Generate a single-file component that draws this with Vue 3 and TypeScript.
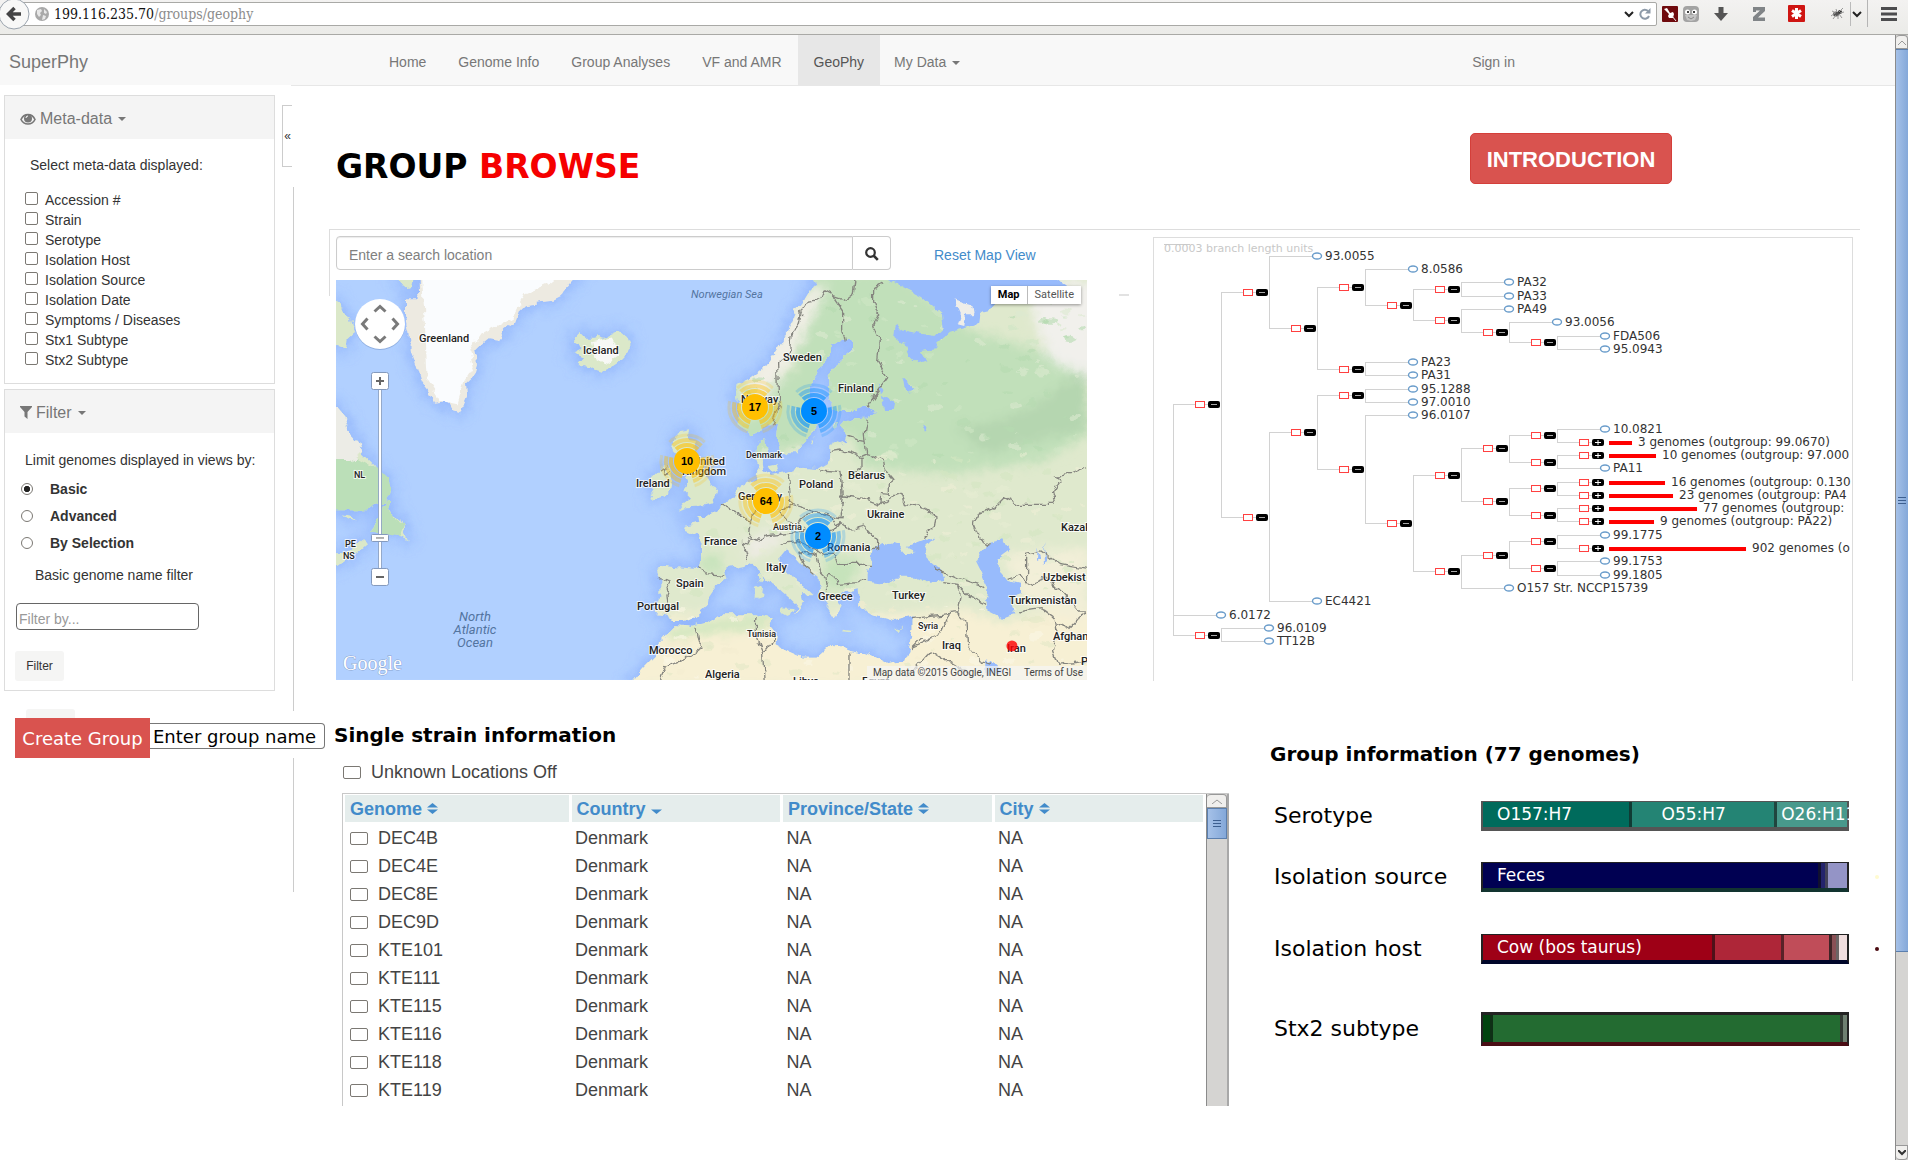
<script setup lang="ts">
import { ref } from 'vue'

interface TreeNode {
  k: number
  y: number
  name?: string
  bar?: number
  c?: TreeNode[]
}

const navItems = ['Home', 'Genome Info', 'Group Analyses', 'VF and AMR', 'GeoPhy']
const metaFields = ['Accession #', 'Strain', 'Serotype', 'Isolation Host', 'Isolation Source', 'Isolation Date', 'Symptoms / Diseases', 'Stx1 Subtype', 'Stx2 Subtype']
const filterModes = ['Basic', 'Advanced', 'By Selection']
const mode = ref('Basic')
const genomes = ['DEC4B', 'DEC4E', 'DEC8E', 'DEC9D', 'KTE101', 'KTE111', 'KTE115', 'KTE116', 'KTE118', 'KTE119']
const columns = [
  { name: 'Genome', sort: 'both' },
  { name: 'Country', sort: 'down' },
  { name: 'Province/State', sort: 'both' },
  { name: 'City', sort: 'both' },
]

const n = (k: number, y: number, c: TreeNode[]): TreeNode => ({ k, y, c })
const leaf = (k: number, y: number, name: string): TreeNode => ({ k, y, name })
const folded = (y: number, bar: number, name: string): TreeNode => ({ k: 9, y, bar, name })

const root = n(0, 0, [
  n(1, 554, [
    n(2, 216, [
      leaf(3, 108, '93.0055'),
      n(3, 325, [
        n(4, 202, [
          leaf(5, 148, '8.0586'),
          n(5, 256, [
            n(6, 208, [leaf(7, 188, 'PA32'), leaf(7, 228, 'PA33')]),
            n(6, 302, [leaf(7, 268, 'PA49'), n(7, 337, [leaf(8, 308, '93.0056'), n(8, 367, [leaf(9, 348, 'FDA506'), leaf(9, 387, '95.0943')])])]),
          ]),
        ]),
        n(4, 447, [leaf(5, 428, 'PA23'), leaf(5, 467, 'PA31')]),
      ]),
    ]),
    n(2, 891, [
      n(3, 637, [
        n(4, 526, [leaf(5, 507, '95.1288'), leaf(5, 547, '97.0010')]),
        n(4, 748, [
          leaf(5, 587, '96.0107'),
          n(5, 910, [
            n(6, 766, [
              n(7, 686, [
                n(8, 646, [leaf(9, 627, '10.0821'), folded(666, 23, '3 genomes (outgroup: 99.0670)')]),
                n(8, 726, [folded(706, 47, '10 genomes (outgroup: 97.000'), leaf(9, 746, 'PA11')]),
              ]),
              n(7, 845, [
                n(8, 805, [folded(786, 56, '16 genomes (outgroup: 0.130'), folded(826, 64, '23 genomes (outgroup: PA4')]),
                n(8, 885, [folded(865, 88, '77 genomes (outgroup:'), folded(905, 45, '9 genomes (outgroup: PA22)')]),
              ]),
            ]),
            n(6, 1054, [
              n(7, 1005, [
                n(8, 965, [leaf(9, 945, '99.1775'), folded(985, 137, '902 genomes (o')]),
                n(8, 1045, [leaf(9, 1025, '99.1753'), leaf(9, 1065, '99.1805')]),
              ]),
              leaf(7, 1105, 'O157 Str. NCCP15739'),
            ]),
          ]),
        ]),
      ]),
      leaf(3, 1144, 'EC4421'),
    ]),
  ]),
  leaf(1, 1185, '6.0172'),
  n(1, 1245, [leaf(2, 1224, '96.0109'), leaf(2, 1264, 'TT12B')]),
])

const px = (k: number) => 19 + 48 * k
const py = (y: number) => Math.round(y / 3 - 18.5)
const links: string[] = []
const forks: { x: number; y: number; plus: boolean }[] = []
const leaves: { x: number; y: number; name: string }[] = []
const bars: { x: number; y: number; w: number; name: string }[] = []
function walk(node: TreeNode) {
  const x = px(node.k)
  for (const child of node.c ?? []) {
    const cx = px(child.k)
    const cy = py(child.y)
    links.push(`M${x + 0.5} ${cy + 0.5}H${child.name && !child.bar ? cx - 5 : cx - 1}`)
    if (child.bar) {
      forks.push({ x: cx, y: cy, plus: true })
      bars.push({ x: cx + 4, y: cy, w: child.bar, name: child.name! })
    } else if (child.name) {
      leaves.push({ x: cx, y: cy, name: child.name })
    } else {
      forks.push({ x: cx, y: cy, plus: false })
    }
    walk(child)
  }
  if (node.c) {
    const ys = node.c.map((d) => py(d.y))
    links.push(`M${x + 0.5} ${Math.min(...ys)}V${Math.max(...ys) + 1}`)
  }
}
walk(root)

const places: [string, number, number, number][] = [
  ['Greenland', 83, 62, 11], ['Iceland', 247, 74, 11], ['NL', 18, 198, 9], ['PE', 9, 267, 9], ['NS', 7, 279, 9],
  ['Sweden', 447, 81, 11], ['Finland', 502, 112, 11], ['Norway', 405, 123, 11], ['Denmark', 410, 178, 9],
  ['Belarus', 512, 199, 11], ['Poland', 463, 208, 11], ['Germany', 402, 220, 11], ['Ukraine', 531, 238, 11],
  ['Austria', 437, 250, 9], ['Romania', 491, 271, 11], ['Italy', 430, 291, 11], ['Greece', 482, 320, 11],
  ['Turkey', 556, 319, 11], ['Syria', 582, 349, 9], ['Iraq', 606, 369, 11], ['Iran', 671, 372, 11],
  ['Tunisia', 411, 357, 9], ['Algeria', 369, 398, 11], ['Libya', 457, 405, 11], ['Egypt', 526, 405, 11],
  ['Kazakh', 725, 251, 11], ['Uzbekist', 707, 301, 11], ['Turkmenistan', 673, 324, 11], ['Afghan', 717, 360, 11],
  ['P', 745, 385, 11], ['United', 357, 185, 11], ['Kingdom', 346, 195, 11], ['Ireland', 300, 207, 11],
  ['France', 368, 265, 11], ['Spain', 340, 307, 11], ['Portugal', 301, 330, 11], ['Morocco', 313, 374, 11],
]
const clusters = [
  { x: 419, y: 127, label: '17', color: '#ffbf00' },
  { x: 478, y: 131, label: '5', color: '#008cff' },
  { x: 430, y: 221, label: '64', color: '#ffbf00' },
  { x: 482, y: 256, label: '2', color: '#008cff' },
  { x: 351, y: 181, label: '10', color: '#ffbf00' },
]

// scattered terrain patches, placed by a small fixed generator
const patches: { x: number; y: number; r: number; c: string }[] = []
let seed = 7
const rnd = () => {
  seed = (seed * 16807) % 2147483647
  return seed / 2147483647
}
for (let i = 0; i < 420; i++) {
  const x = 1000 + rnd() * 1260
  const y = 240 + rnd() * 1130
  const tones = y < 700 ? ['#cfe6c4', '#b6dab0', '#dcead0'] : y < 1150 ? ['#d3e6c1', '#eeeed6', '#e6ecd2'] : ['#f3ecd0', '#e3e8c6', '#faf6e4']
  patches.push({ x, y, r: 5 + rnd() * 17, c: tones[i % 3] })
}

// segment widths are percentages of the bar
const groups = [
  { name: 'Serotype', tone: 'sero', segs: [
    { w: 40, c: '#006b5c', t: 'O157:H7' }, { w: 40, c: '#248474', t: 'O55:H7' }, { w: 20, c: '#48998c', t: 'O26:H11' }] },
  { name: 'Isolation source', tone: 'source', segs: [
    { w: 92, c: '#000052', t: 'Feces' }, { w: 2, c: '#24246c', t: '' }, { w: 6, c: '#9494c6', t: '' }] },
  { name: 'Isolation host', tone: 'host', segs: [
    { w: 63, c: '#9e0016', t: 'Cow (bos taurus)' }, { w: 19, c: '#ae2638', t: '' }, { w: 13, c: '#c04d59', t: '' }, { w: 2, c: '#8a5055', t: '' }, { w: 3, c: '#f0dede', t: '' }] },
  { name: 'Stx2 subtype', tone: 'stx', segs: [
    { w: 2, c: '#00430e', t: '' }, { w: 96, c: '#236b31', t: '' }, { w: 2, c: '#6e7f70', t: '' }] },
]
</script>

<template>
  <div class="window">
    <header class="toolbar">
      <button class="back" aria-label="Back">
        <svg width="30" height="31" viewBox="0 0 30 31"><circle cx="14" cy="14" r="15" fill="#f8f8f7" stroke="#9aa3ad" /><path d="M21 14H9M14.500 8L8.500 14l6 6" fill="none" stroke="#454545" stroke-width="3.500" /></svg>
      </button>
      <div class="address">
        <svg width="14" height="14" viewBox="0 0 14 14"><circle cx="7" cy="7" r="7" fill="#a9a9a9" /><path d="M2 3l4-1 1 2-2 2 1 2-2 2-2-3zM9 2l3 3-1 2-2-1zM8 8l3 1-1 3-3 1z" fill="#e8e8e8" /></svg>
        <span class="url"><b>199.116.235.70</b>/groups/geophy</span>
        <svg width="10" height="7" viewBox="0 0 10 7"><path d="M1 1l4 4 4-4" fill="none" stroke="#222" stroke-width="2" /></svg>
        <svg width="12" height="12" viewBox="0 0 12 12"><path d="M10 8a4.500 4.500 0 1 1-1-5" fill="none" stroke="#8d9aa8" stroke-width="2" /><path d="M11.500 0v5.500H6z" fill="#8d9aa8" /></svg>
      </div>
      <div class="tools">
        <svg width="16" height="16" viewBox="0 0 16 16"><rect width="16" height="16" rx="1" fill="#6f0a0d" /><path d="M2 3l3-1 3 5 3-1 1 2-1 4-4 0-1-2 1-2z" fill="#fff" /><path d="M10 10l4 5" stroke="#eee" /></svg>
        <svg width="16" height="16" viewBox="0 0 16 16"><rect width="16" height="16" rx="4" fill="#a3a3a3" /><path d="M2 9h12l-2 5-4 1-4-1z" fill="#c4c4c4" /><circle cx="4.500" cy="6" r="2.500" fill="#fff" /><circle cx="11.500" cy="6" r="2.500" fill="#fff" /><circle cx="5" cy="6" r="1" /><circle cx="11" cy="6" r="1" /><path d="M5 11l3 2 3-2" fill="none" stroke="#888" /></svg>
        <svg class="t3" width="14" height="14" viewBox="0 0 14 14"><path d="M4.500 0h5v6H14l-7 8-7-8h4.500z" fill="#555" /></svg>
        <svg class="t4" width="12" height="14" viewBox="0 0 12 14"><path d="M0 0h12v4L5 10.500h7V14H0v-4l7-6.500H3V5H0z" fill="#808487" /></svg>
        <svg class="t5" width="17" height="17" viewBox="0 0 17 17"><rect width="17" height="17" rx="1" fill="#cf1512" /><path d="M8.500 3v11M4 5.500l9 6M13 5.500l-9 6" stroke="#fff" stroke-width="3" /></svg>
        <svg class="t6" width="15" height="13" viewBox="0 0 15 13"><ellipse cx="6" cy="7" rx="3" ry="2.500" fill="#555" /><circle cx="10" cy="5" r="2" fill="#333" /><path d="M1 9l4-3M3 12l3-4M8 12V8M12 11L9 7M14 5l-4 1M13 1l-4 4M2 4l4 2M6 2l1 3" stroke="#999" /></svg>
        <svg class="t7" width="12" height="24" viewBox="0 0 12 24"><path d="M.5 0v24" stroke="#bbb" /><path d="M3 10l4 4 4-4" fill="none" stroke="#222" stroke-width="2" /></svg>
        <i class="sep"></i>
        <svg width="16" height="14" viewBox="0 0 16 14"><path d="M0 1.500h16M0 7h16M0 12.500h16" stroke="#4c4c4e" stroke-width="3" /></svg>
      </div>
    </header>

    <div class="view">
      <div class="page">
        <nav class="nav">
          <a class="brand" href="#">SuperPhy</a>
          <a v-for="item in navItems" :key="item" href="#" class="item" :class="{ active: item === 'GeoPhy' }">{{ item }}</a>
          <a href="#" class="item data">My Data <i class="caret"></i></a>
          <a href="#" class="item sign">Sign in</a>
        </nav>

        <div class="body">
          <aside class="side">
            <div class="upper">
              <div class="panels">
                <section class="panel">
                  <h2>
                    <svg width="16" height="12" viewBox="0 0 16 12"><path d="M1 6.500C4 0 12 0 15 6.500 12 12.500 4 12.500 1 6.500z" fill="none" stroke="#777" stroke-width="1.600" /><circle cx="8" cy="5.500" r="4" fill="#777" /><path d="M6 5a2 2 0 0 1 2-2" stroke="#fff" fill="none" /></svg>
                    Meta-data <i class="caret"></i>
                  </h2>
                  <p class="lead">Select meta-data displayed:</p>
                  <label v-for="f in metaFields" :key="f" class="check"><input type="checkbox" />{{ f }}</label>
                </section>
                <section class="panel filter">
                  <h2>
                    <svg width="12" height="13" viewBox="0 0 12 13"><path d="M0 0h12v1L7.500 6v7l-3-2.500V6L0 1z" fill="#777" /></svg>
                    Filter <i class="caret"></i>
                  </h2>
                  <p class="limit">Limit genomes displayed in views by:</p>
                  <label v-for="m in filterModes" :key="m" class="radio"><input v-model="mode" type="radio" name="mode" :value="m" />{{ m }}</label>
                  <label class="basic" for="by">Basic genome name filter</label>
                  <input id="by" class="by" type="text" placeholder="Filter by..." />
                  <button class="apply">Filter</button>
                </section>
                <div class="stub"></div>
              </div>
              <div class="rail">
                <button class="fold" aria-label="Collapse sidebar">«</button>
                <div class="line"></div>
              </div>
            </div>
            <div class="create">
              <button>Create Group</button>
              <input type="text" value="Enter group name" aria-label="Group name" />
            </div>
            <div class="tail"></div>
          </aside>

          <main class="main">
            <div class="head">
              <h1>GROUP <span>BROWSE</span></h1>
              <button class="intro">INTRODUCTION</button>
            </div>

            <div class="views">
              <section class="geo">
                <div class="search">
                  <input type="text" placeholder="Enter a search location" aria-label="Search location" />
                  <button aria-label="Search">
                    <svg width="14" height="14" viewBox="0 0 14 14"><circle cx="5.500" cy="5.500" r="4.300" fill="none" stroke="#333" stroke-width="2.200" /><path d="M8.500 8.500l4.300 4.300" stroke="#333" stroke-width="2.600" /></svg>
                  </button>
                  <a href="#">Reset Map View</a>
                </div>
                <div class="map">
                  <svg class="canvas" viewBox="0 0 751 400">
                    <defs>
                      <filter id="rough" x="0" y="0" width="1" height="1"><feTurbulence type="fractalNoise" baseFrequency="0.090" numOctaves="3" seed="4" /><feDisplacementMap in="SourceGraphic" scale="9" xChannelSelector="R" yChannelSelector="G" /></filter>
                      <filter id="glow"><feGaussianBlur stdDeviation="22" /></filter>
                      <filter id="soft"><feGaussianBlur stdDeviation="16" /></filter>
                      <path id="europe" d="M1435 150L1450 190 1425 230 1395 270 1375 320 1355 360 1330 400 1300 440 1260 470 1220 490 1215 530 1225 570 1220 610 1260 640 1300 625 1325 600 1335 610 1330 640 1350 690 1370 700 1405 700 1415 665 1440 635 1455 600 1432 570 1430 500 1460 460 1470 430 1500 400 1500 370 1530 357 1560 365 1562 390 1540 410 1515 430 1495 470 1495 540 1515 570 1570 570 1605 562 1640 570 1610 590 1570 592 1540 600 1530 620 1548 645 1545 670 1520 655 1495 670 1495 700 1490 730 1465 745 1410 740 1370 755 1320 765 1300 750 1295 720 1310 690 1305 655 1275 680 1270 710 1285 750 1280 775 1255 785 1220 800 1205 830 1170 855 1130 885 1102 885 1105 905 1055 915 1065 930 1100 945 1110 975 1110 1030 1100 1045 1060 1040 1000 1035 975 1045 985 1075 985 1130 970 1175 1000 1180 1030 1200 1050 1200 1090 1190 1125 1160 1130 1130 1150 1100 1185 1070 1180 1050 1200 1040 1250 1030 1285 1045 1300 1080 1340 1100 1375 1130 1395 1150 1390 1180 1420 1140 1415 1120 1445 1120 1420 1095 1385 1070 1360 1040 1345 1010 1365 985 1385 1000 1410 1030 1460 1070 1465 1120 1495 1160 1515 1190 1535 1160 1520 1130 1545 1110 1580 1105 1585 1150 1610 1175 1650 1190 1690 1200 1745 1185 1745 1230 1730 1290 1720 1320 1670 1330 1610 1300 1555 1290 1505 1270 1460 1310 1415 1310 1370 1290 1330 1270 1335 1240 1315 1215 1325 1195 1270 1180 1170 1180 1130 1205 1080 1215 1040 1210 1020 1230 985 1270 980 1300 940 1340 890 1400H2310V150z" />
                      <g id="isles">
                        <path d="M18 240L35 280 60 290 72 330 50 350 45 385 0 370V240zM195 170H245L240 195 215 200z" />
                        <path d="M18 560L35 580 55 630 80 660 95 700 130 735 145 760 165 770 180 795 178 820 150 850 110 868 50 868H-10V540zM165 835L180 840 170 870 195 885 215 900 220 930 230 955 205 945 185 940 150 930 120 935 135 900 150 870zM-10 1000L60 985 95 955 108 970 80 995 45 1015 25 1030-10 1040zM35 880L60 885 75 898 50 892z" />
                        <path d="M725 350L745 330 765 350 785 350 800 345 820 350 850 335 865 330 885 345 897 375 890 400 870 420 840 440 812 452 785 443 765 430 745 430 760 410 725 395 755 380 728 365z" />
                        <path d="M975 760L1000 735 1020 745 1028 775 1025 800 1000 822 965 832 955 825 970 800 960 775zM1045 630L1075 625 1065 650 1095 655 1090 680 1075 700 1105 720 1120 760 1140 790 1160 800 1155 830 1140 850 1100 860 1065 862 1040 872 1060 845 1080 830 1060 810 1075 790 1065 770 1080 750 1050 730 1035 710 1025 680 1035 660z" />
                        <path d="M1275 1090l18 10-3 35-16 5zM1280 1060l12-8 2 25-8 8zM1345 1162l40 2-12 24-28-16zM1535 1220l32 4-10 4-22-3zM1690 1222l24-5-12 13zM1310 735l25-5 5 20-20 5zM1440 665l14-18-8 22zM1505 605l20 5-12 18-10-8z" />
                      </g>
                      <path id="green" d="M268 150L270 215 255 235 225 235 225 290 235 340 240 390 255 430 270 480 295 510 312 545 350 540 365 570 388 577 395 550 408 520 405 490 425 470 438 430 430 390 445 375 470 355 500 360 520 330 550 310 565 270 585 250 620 245 660 240 690 225 705 200 750 150z" />
                      <g id="water">
                        <path d="M1620 1020L1625 990 1660 960 1700 975 1720 1000 1760 990 1730 975 1780 955 1810 950 1780 980 1790 1010 1835 1050 1840 1080 1800 1085 1760 1070 1700 1070 1650 1090 1610 1085 1610 1060z" />
                        <path d="M1975 965L2020 955 2035 985 2000 1010 2005 1050 2030 1080 2070 1090 2070 1120 2040 1130 2050 1180 2010 1190 1970 1170 1965 1130 1970 1100 1950 1050 1935 1020z" />
                        <path d="M1695 310L1725 330 1810 345 1835 320 1830 280 1770 225 1710 195 1660 170H2170L2210 200 2070 215 2010 230 1985 262 1950 270 1945 305 1910 318 1860 332 1820 370 1815 385 1770 390 1785 420 1760 430 1730 400 1720 370 1690 345z" />
                        <path d="M1650 520L1690 545 1685 570 1660 570zM1715 470L1750 500 1740 515 1720 500zM1640 490l20 15-10 12zM1775 610l20 15-10 10zM1960 1318L2000 1330 2020 1352 1960 1360zM2140 970l10 50-8 5zM2120 980l8 35-10 5z" />
                      </g>
                    </defs>
                    <rect width="751" height="400" fill="#b1d0ff" />
                    <g filter="url(#rough)">
                      <g transform="translate(-5 -59) scale(.33333)">
                        <g filter="url(#glow)" fill="#83a9fa" stroke="#83a9fa" stroke-width="20" opacity=".65"><use href="#europe" /><use href="#green" /><use href="#isles" /></g>
                        <use href="#europe" fill="#dfe9cd" />
                        <use href="#isles" fill="#dbe8c9" />
                        <path d="M-10 720L60 700 140 745 165 770 180 795 178 820 150 850 110 868H-10zM165 835L180 840 170 870 220 910 205 945 120 935z" fill="#bbdfb8" />
                        <path d="M18 560L35 580 55 630 80 660 95 700 60 720H-10V540z" fill="#ececE6" />
                        <use href="#green" fill="#edeae1" />
                        <path d="M272 150L283 330 290 480 330 540 380 550 400 480 425 440 415 390 450 340 510 310 545 290 580 220 650 190 700 150z" fill="#fafcfe" />
                        <path d="M780 360L840 350 865 400 820 430 790 410z" fill="#f7f8f5" />
                        <clipPath id="land"><use href="#europe" /></clipPath>
                        <g clip-path="url(#land)">
                          <g filter="url(#soft)">
                            <path d="M1430 150H1700L1900 320 2100 380 2170 400 2271 420V640L2140 720 1850 760 1600 740 1560 640 1200 720V500L1390 450z" fill="#c1e0ba" />
                            <path d="M1980 600L2100 560 2271 430V630L2150 650 1960 700 1870 620z" fill="#b5d6b0" />
                            <path d="M2100 180H2300V480L2160 420 2110 300z" fill="#f1f0ec" />
                            <path d="M890 1400V1180H1340L1740 1180 1900 1160 2000 1200 2310 1150V1400z" fill="#f7f0d4" />
                            <path d="M2010 1000L2271 980V1200L2080 1150z" fill="#f2efd8" />
                            <path d="M1010 1220L1120 1200 1340 1180 1310 1220 1120 1240 1010 1260z" fill="#cfe6be" />
                            <path d="M1230 520L1440 200 1490 190 1390 400 1330 500 1240 600z" fill="#f1efe6" />
                            <path d="M1240 960L1330 930 1380 950 1330 970 1250 1020z" fill="#efece6" />
                            <path d="M1110 1000l60 0 10 60-70-15zM1480 1000l110 20-30 80-80 10z" fill="#c6e3bb" />
                          </g>
                          <ellipse v-for="(p, i) in patches" :key="i" :cx="p.x" :cy="p.y" :rx="p.r" :ry="p.r / 2" :fill="p.c" opacity=".6" />
                        </g>
                        <use href="#water" fill="#98bbfc" />
                        <path d="M1870 235L1920 250 1925 280 1905 280 1900 315 1880 310 1890 280z" fill="#efeee9" />
                        <g fill="none" stroke="#85857f" stroke-width="4">
                          <path d="M1575 180L1570 215 1545 235 1500 220 1480 210 1470 235 1435 240 1410 275 1405 310 1380 345 1375 400 1340 430 1342 510 1348 550 1325 610M1500 220L1535 270 1535 320 1543 365M1660 185L1625 205 1625 240 1640 280 1625 310 1645 360 1640 420 1670 470 1605 562M1612 592L1603 640 1610 700 1640 710 1660 720 1665 750 1690 780 1675 790 1675 820 1652 818 1650 850 1600 832 1540 825" />
                          <path d="M1548 645L1580 655 1605 658M1495 695L1530 690 1570 700 1590 710 1612 700M1570 750L1590 740 1590 710M1465 750L1530 755 1537 820 1540 830 1530 890 1500 885 1450 870 1380 850 1372 760M1380 850L1345 870 1370 900 1400 910 1420 880 1450 870M1170 850L1230 880 1260 905 1275 870M1265 910L1260 950 1250 970 1235 965 1250 1020M1250 950L1290 960 1300 945 1400 935 1420 920M1500 885L1510 915 1530 905 1560 925 1600 915 1640 960 1640 985 1620 990M1530 905L1510 930 1460 950 1455 990 1480 1000 1510 1000 1520 1030 1620 1030M1350 970L1400 965 1455 990M1400 990L1420 1035 1450 1060M1400 990L1440 1005 1455 1000 1465 1050 1485 1070 1500 1060 1515 1070 1520 1090 1580 1085 1605 1070M1490 1110L1485 1070M1100 1040L1130 1055 1180 1060M980 1070L1020 1080 1005 1120 1010 1170M1095 1220L1105 1270 1112 1280 1070 1310 1000 1340 985 1380M1275 1185L1272 1240 1295 1300 1300 1380M1325 1235L1325 1260 1295 1300M1557 1295V1380M1740 1190L1880 1175 1890 1130 1880 1090 1840 1085M1650 850L1680 830 1710 820 1720 850 1770 860 1815 885 1810 920 1780 950M1880 1175L1905 1200 1910 1270 1950 1320 1980 1330M1740 1280L1830 1240 1855 1180M1740 1280L1770 1250 1790 1260M1730 1370L1800 1290 1930 1370M1810 1040L1880 1070 1940 1090 1960 1100M1880 1090L1920 1130 1965 1150M1975 970L1950 960 1930 910 1940 880 1990 860 2020 830 2060 850 2110 850 2175 850 2165 820 2190 780 2175 765 2220 760 2271 740M2087 1090V1000L2130 990 2185 1030 2271 1045M2030 1075L2060 1065 2100 1090 2150 1070 2190 1110 2240 1170 2271 1170M2060 1170L2130 1160 2170 1190 2175 1240 2165 1290 2180 1330 2271 1320M2175 1210L2210 1220 2240 1190 2271 1175M990 750L1005 740 1000 765 1020 755" />
                        </g>
                      </g>
                    </g>
                    <text class="sea" x="355" y="18">Norwegian Sea</text>
                    <text class="ocean" x="139" y="341">North</text>
                    <text class="ocean" x="139" y="354">Atlantic</text>
                    <text class="ocean" x="139" y="367">Ocean</text>
                    <text v-for="p in places" :key="p[0]" class="place" :x="p[1]" :y="p[2]" :font-size="p[3]">{{ p[0] }}</text>
                    <g v-for="c in clusters" :key="c.label" :transform="`translate(${c.x} ${c.y})`">
                      <g fill="none" :stroke="c.color" stroke-dasharray="86 34" transform="rotate(-133)">
                        <circle r="16" pathLength="360" stroke-width="4" opacity=".6" />
                        <circle r="21" pathLength="360" stroke-width="4" opacity=".4" />
                        <circle r="26" pathLength="360" stroke-width="3" opacity=".2" />
                      </g>
                      <circle r="13" :fill="c.color" />
                      <text class="count" y="4">{{ c.label }}</text>
                    </g>
                    <circle cx="676" cy="366" r="5.500" fill="#f00" opacity=".8" />
                    <g>
                      <circle cx="44" cy="45" r="25" fill="#6f8fc4" opacity=".5" /><circle cx="44" cy="44" r="25" fill="#fff" />
                      <path d="M38.500 31.500l5.500-5 5.500 5M38.500 56.500l5.500 5 5.500-5M31.500 38.500l-5 5.500 5 5.500M56.500 38.500l5 5.500-5 5.500" fill="none" stroke="#7a7a7a" stroke-width="3" />
                      <rect x="42.500" y="106" width="3" height="186" fill="#fff" stroke="#8399bd" stroke-width=".8" />
                      <g fill="#fff" stroke="#8399bd"><rect x="35.500" y="92.500" width="17" height="17" rx="2" /><rect x="35.500" y="254.500" width="17" height="7" rx="1" /><rect x="35.500" y="288.500" width="17" height="17" rx="2" /></g>
                      <path d="M40 101h8M44 97v8M40 297h8" stroke="#666" stroke-width="2" /><path d="M40 258h8" stroke="#666" />
                    </g>
                    <text class="google" x="7" y="390">Google</text>
                    <rect x="531" y="386" width="220" height="14" fill="#f5f5f5" opacity=".7" />
                    <text class="credit" x="537" y="396">Map data ©2015 Google, INEGI</text>
                    <text class="credit" x="688" y="396">Terms of Use</text>
                  </svg>
                  <div class="kind"><button class="on">Map</button><button>Satellite</button></div>
                </div>
              </section>

              <i class="dash"></i>

              <section class="tree">
                <svg viewBox="0 0 698 443">
                  <path d="M10 6.500h26" stroke="#ccc" />
                  <text class="scale" x="10" y="14">0.0003 branch length units</text>
                  <path v-for="(d, i) in links" :key="i" :d="d" stroke="#d2d2d2" fill="none" />
                  <g v-for="(f, i) in forks" :key="'f' + i" :transform="`translate(${f.x} ${f.y})`">
                    <rect x="-25.500" y="-2.500" width="9" height="6" fill="#fff" stroke="#ff4040" />
                    <rect x="-13" y="-3" width="12" height="7" rx="2" fill="#000" />
                    <path :d="f.plus ? 'M-10 .5h6M-7-2v5' : 'M-10 .5h6'" :stroke="f.plus ? '#fff' : '#aaa'" />
                  </g>
                  <g v-for="l in leaves" :key="l.name">
                    <ellipse :cx="l.x" :cy="l.y" rx="4.500" ry="3" fill="#fff" stroke="#6b9dcb" stroke-width="1.400" />
                    <text :x="l.x + 8" :y="l.y + 4">{{ l.name }}</text>
                  </g>
                  <g v-for="b in bars" :key="b.name">
                    <rect :x="b.x" :y="b.y - 1" :width="b.w" height="4" fill="#f00" />
                    <text :x="b.x + b.w + 6" :y="b.y + 4">{{ b.name }}</text>
                  </g>
                </svg>
              </section>
            </div>

            <div class="info">
              <section class="strain">
                <h2>Single strain information</h2>
                <label class="unknown"><input type="checkbox" />Unknown Locations Off</label>
                <div class="grid">
                  <div class="sheet">
                    <table>
                      <thead>
                        <tr>
                          <th v-for="c in columns" :key="c.name">
                            <a href="#">{{ c.name }}
                              <svg v-if="c.sort === 'both'" width="11" height="11" viewBox="0 0 11 11"><path d="M5.500 0L11 4.500H0zM5.500 11L0 6.500h11z" fill="#428bca" /></svg>
                              <svg v-else width="11" height="11" viewBox="0 0 11 11"><path d="M5.500 11L0 6.500h11z" fill="#428bca" /></svg>
                            </a>
                          </th>
                        </tr>
                      </thead>
                      <tbody>
                        <tr v-for="g in genomes" :key="g">
                          <td><label><input type="checkbox" />{{ g }}</label></td>
                          <td>Denmark</td>
                          <td>NA</td>
                          <td>NA</td>
                        </tr>
                      </tbody>
                    </table>
                  </div>
                  <div class="scroll inner">
                    <div class="btn"><svg width="10" height="5" viewBox="0 0 10 5"><path d="M0 5l5-4 5 4" fill="none" stroke="#999" /></svg></div>
                    <div class="thumb"><i></i></div>
                  </div>
                </div>
              </section>

              <section class="group">
                <h2>Group information (77 genomes)</h2>
                <div v-for="g in groups" :key="g.name" class="row" :class="g.tone">
                  <span class="name">{{ g.name }}</span>
                  <div class="bar">
                    <span v-for="(s, i) in g.segs" :key="i" :style="{ width: s.w + '%', background: s.c }">{{ s.t }}</span>
                  </div>
                  <i class="speck"></i>
                </div>
              </section>
            </div>
          </main>
        </div>
      </div>

      <div class="scroll outer">
        <div class="btn"><svg width="8" height="5" viewBox="0 0 8 5"><path d="M0 5l4-4 4 4" fill="none" stroke="#999" /></svg></div>
        <div class="thumb"><i></i></div>
        <div class="btn last"><svg width="8" height="6" viewBox="0 0 8 6"><path d="M0 0l4 4 4-4" fill="none" stroke="#333" stroke-width="2" /></svg></div>
      </div>
    </div>
  </div>
</template>

<style>
body { margin: 0; background: #fff; }
</style>

<style scoped>
* { box-sizing: border-box; }
.window { display: flex; flex-direction: column; min-height: 100vh; font: 14px/20px "Liberation Sans", sans-serif; color: #333; }
button, input { font: inherit; color: inherit; margin: 0; }
a { text-decoration: none; }
h1, h2, p { margin: 0; }
svg { flex: none; display: block; }

.toolbar { display: flex; align-items: flex-start; height: 35px; background: linear-gradient(#f3f2f1, #ebebe8); border-bottom: 1px solid #a9a9a6; overflow: hidden; }
.back { border: 0; padding: 0; background: none; width: 30px; z-index: 1; }
.address { flex: 1; display: flex; align-items: center; height: 24px; margin: 2px 0 0 -8px; padding: 0 5px 0 12px; border: 1px solid #a9a9a6; border-radius: 2px; background: #fff; gap: 5px; }
.url { font: 14px/20px "DejaVu Serif Condensed", "DejaVu Serif", serif; color: #8c8c8c; flex: 1; }
.url b { font-weight: 400; color: #111; }
.tools { display: flex; align-items: center; height: 27px; padding: 0 11px 0 5px; gap: 5px; }
.t3 { margin-left: 10px; }
.t4 { margin-left: 20px; }
.t5 { margin-left: 18px; }
.t6 { margin-left: 20px; }
.sep { width: 1px; height: 27px; background: #b5b5b5; margin-right: 8px; }

.view { display: flex; flex: 1; }
.page { flex: 1; min-width: 0; }
.nav { display: flex; height: 50px; background: #f8f8f8; position: relative; }
.nav::after { content: ""; position: absolute; left: 291px; right: 0; bottom: -1px; height: 1px; background: #e7e7e7; }
.brand { width: 373px; padding: 17px 9px 13px; font-size: 18px; color: #777; }
.item { padding: 17px 16px 13px; line-height: 20px; height: 51px; color: #777; white-space: nowrap; }
.active { background: #e7e7e7; color: #555; z-index: 1; }
.data { padding-left: 14px; }
.sign { margin-left: 480px; }
.caret { display: inline-block; border: 4px solid transparent; border-top-color: currentColor; border-bottom: 0; margin-left: 2px; vertical-align: middle; }

.body { display: flex; }
.side { width: 329px; flex: none; }
.upper { display: flex; padding-left: 4px; }
.panels { width: 271px; padding-top: 10px; }
.panel { border: 1px solid #ddd; padding-bottom: 13px; margin-bottom: 5px; }
.panel h2 { display: flex; align-items: center; gap: 4px; height: 43px; padding: 2px 0 0 15px; background: #f4f4f4; font: 16px/20px "Liberation Sans", sans-serif; color: #777; }
.lead { padding: 16px 0 15px 25px; }
.check { display: flex; padding-left: 20px; gap: 7px; }
.check input { margin: 2px 0 0; }
input[type="checkbox"] { appearance: none; width: 13px; height: 13px; border: 1px solid #7b7873; border-radius: 2px; background: #fff; flex: none; }
.filter { padding-bottom: 10px; margin-bottom: 0; height: 302px; }
.limit { padding: 17px 0 5px 20px; }
.radio { display: flex; align-items: center; gap: 17px; height: 27px; padding-left: 16px; font-weight: 700; }
.radio input { appearance: none; width: 12px; height: 12px; border: 1px solid #7b7873; border-radius: 50%; }
.radio input:checked { background: radial-gradient(circle, #222 40%, #fff 48%); }
.basic { display: block; padding: 9px 0 18px 30px; }
.by { display: block; width: 183px; height: 27px; margin-left: 11px; padding: 4px 2px 0; border: 1px solid #666; border-radius: 4px; }
.by::placeholder { color: #999; opacity: 1; }
.apply { display: block; width: 49px; height: 30px; margin: 21px 0 0 10px; padding: 0; border: 0; border-radius: 3px; background: #f5f5f4; font-size: 12px; }
.stub { width: 49px; height: 9px; margin: 18px 0 0 22px; border-radius: 3px 3px 0 0; background: #f5f5f4; }
.rail { width: 19px; display: flex; flex-direction: column; padding-top: 20px; }
.fold { width: 10px; height: 62px; margin: 0 0 20px 7px; padding: 0; border: 1px solid #ccc; border-right: 0; background: #fff; font: 12px/16px "Liberation Sans", sans-serif; overflow: hidden; }
.line { flex: 1; margin-left: 18px; border-left: 1px solid #ccc; margin-bottom: 7px; }
.create { display: flex; align-items: flex-start; padding-left: 15px; font: 18px/24px "DejaVu Sans", sans-serif; }
.create button { width: 135px; height: 40px; padding: 2px 0 0; border: 0; background: #d9534f; color: #fff; white-space: nowrap; }
.create input { width: 175px; height: 26px; margin-top: 5px; padding: 0 3px; border: 1px solid #777; border-left: 0; border-radius: 0 4px 4px 0; color: #000; background: #fff; }
.tail { height: 134px; margin-left: 293px; border-left: 1px solid #ccc; }

.main { flex: 1; min-width: 0; padding: 0 35px 20px 0; }
.head { display: flex; height: 144px; padding: 48px 188px 0 7px; justify-content: space-between; align-items: flex-start; }
h1 { font: 700 33px/40px "DejaVu Sans", sans-serif; color: #000; padding-top: 14px; }
h1 span { color: #f50000; }
.intro { width: 202px; height: 51px; border: 1px solid #d43f3a; border-radius: 5px; background: #d9534f; color: #fff; font-size: 22px; font-weight: 700; padding: 3px 0 0; }

.views { display: flex; align-items: flex-start; padding: 6px 7px 0 7px; border-top: 1px solid #ddd; position: relative; }
.views::before { content: ""; position: absolute; left: 0; top: 0; height: 66px; border-left: 1px solid #ddd; }
.geo { flex: 752 1 0; min-width: 0; }
.search { display: flex; height: 34px; margin-bottom: 10px; }
.search input { width: 517px; border: 1px solid #ccc; border-radius: 4px 0 0 4px; padding: 3px 12px 0; box-shadow: inset 0 1px 1px rgba(0, 0, 0, .08); }
.search input::placeholder { color: #808080; opacity: 1; }
.search button { width: 38px; padding: 2px 0 0 12px; border: 1px solid #ccc; border-left: 0; border-radius: 0 4px 4px 0; background: #fff; }
.search a { margin-left: 43px; line-height: 38px; color: #428bca; white-space: nowrap; }
.map { position: relative; }
.canvas { width: 100%; height: auto; overflow: hidden; }
.place { font-family: Roboto, sans-serif; font-weight: 500; fill: #222; stroke: rgba(255, 255, 255, .75); stroke-width: 2px; paint-order: stroke; }
.sea, .ocean { font: italic 11px Roboto, sans-serif; fill: #53749f; }
.ocean { font-size: 13px; text-anchor: middle; }
.count { font: 700 11px "Liberation Sans", sans-serif; text-anchor: middle; fill: #000; }
.google { font: 20px "Liberation Serif", serif; fill: #fff; stroke: rgba(100, 120, 160, .5); paint-order: stroke; }
.credit { font: 10px Roboto, sans-serif; fill: #444; }
.kind { position: absolute; top: 6px; right: 6px; display: flex; box-shadow: 0 1px 3px rgba(0, 0, 0, .4); }
.kind button { height: 18px; border: 0; padding: 0 7px; background: #fff; font: 11px/18px Roboto, sans-serif; color: #555; }
.kind .on { font-weight: 700; color: #000; border-right: 1px solid #bbb; }
.dash { width: 10px; height: 2px; margin: 58px 24px 0 32px; background: #e2e2e2; }
.tree { flex: 699 1 0; min-width: 0; margin-top: 1px; border: 1px solid #ddd; border-bottom: 0; overflow: hidden; }
.tree svg { width: 100%; height: auto; }
.tree text { font: 12px "DejaVu Sans", sans-serif; fill: #333; }
.tree .scale { font-size: 11px; fill: #c8c8c8; }

.info { display: grid; grid-template-columns: 895fr 631fr; padding-left: 5px; }
h2 { font: 700 20px/24px "DejaVu Sans", sans-serif; color: #000; }
.strain { min-width: 0; padding-top: 42px; }
.unknown { display: flex; align-items: center; gap: 10px; margin: 12px 0 8px 9px; height: 26px; font-size: 18px; color: #444; }
.unknown input, .grid td input { width: 18px; height: 13px; }
.grid { display: flex; margin-left: 8px; border: 1px solid #c8c8c8; border-width: 1px 0 0 1px; height: 313px; overflow: hidden; }
.sheet { flex: 1; min-width: 0; padding: 1px 0 0 2px; }
table { width: 100%; border-collapse: collapse; table-layout: fixed; font-size: 18px; line-height: 22px; color: #444; }
th { height: 27px; padding: 0 0 0 5px; text-align: left; background: #e5edec; border-right: 3px solid #fff; }
th a { display: flex; align-items: center; gap: 5px; color: #428bca; }
th:nth-child(1) { width: 225px; }
td { height: 28px; padding: 4px 0 0 5px; }
td label { display: flex; align-items: center; gap: 10px; }
.group { min-width: 0; margin-right: -26px; padding: 61px 0 0 41px; }
.row { display: flex; align-items: center; font: 22px/28px "DejaVu Sans", sans-serif; color: #000; height: 30px; }
.name { flex: 0 0 211px; padding-left: 4px; }
.bar { flex: 0 1 368px; display: flex; height: 30px; border: 2px solid #222; border-width: 1px 2px 4px; }
.bar span { min-width: 0; padding-left: 14px; border-left: 3px solid rgba(0, 0, 0, .55); font-size: 17px; line-height: 24px; color: #fff; white-space: nowrap; }
.bar span:first-child { border-left: 0; }
.bar span:empty { padding: 0; }
.sero { margin-top: 35px; }
.sero .bar span:nth-child(2) { padding-left: 30px; }
.sero .bar span:nth-child(3) { padding-left: 4px; }
.sero .bar { border-color: #555; }
.source { margin-top: 31px; }
.source .bar { border-bottom-color: #123430; }
.host { margin-top: 42px; }
.host .bar { border-bottom-color: #00062a; }
.stx { margin-top: 48px; height: 34px; }
.stx .bar { height: 34px; border-top-width: 3px; border-bottom-color: #4a0d14; }
.speck { flex: none; width: 4px; height: 4px; border-radius: 2px; margin-left: 26px; }
.source .speck { background: #fffbd0; }
.host .speck { background: #4a0a10; }

.scroll { display: flex; flex-direction: column; flex: none; background: #d5d4d2; border-left: 1px solid #8b8b8b; }
.inner { width: 23px; border-right: 2px solid #a8a8a8; }
.outer { width: 13px; }
.btn { height: 14px; flex: none; display: grid; place-items: center; background: #f0efed; border: 1px solid #999; border-radius: 4px 4px 0 0; border-left: 0; }
.last { margin-top: auto; height: 15px; border-radius: 0 0 4px 4px; }
.thumb { height: 31px; flex: none; display: grid; place-items: center; background: linear-gradient(90deg, #a5c1e8, #84a8d9); border: 1px solid #5b7fae; }
.outer .thumb { flex: 0 1 903px; border-width: 1px 0 1px 0; }
.thumb i { width: 8px; height: 7px; border: 1px solid #3d5f90; border-width: 1px 0; background: linear-gradient(#3d5f90, #3d5f90) center / 100% 1px no-repeat; }
</style>
